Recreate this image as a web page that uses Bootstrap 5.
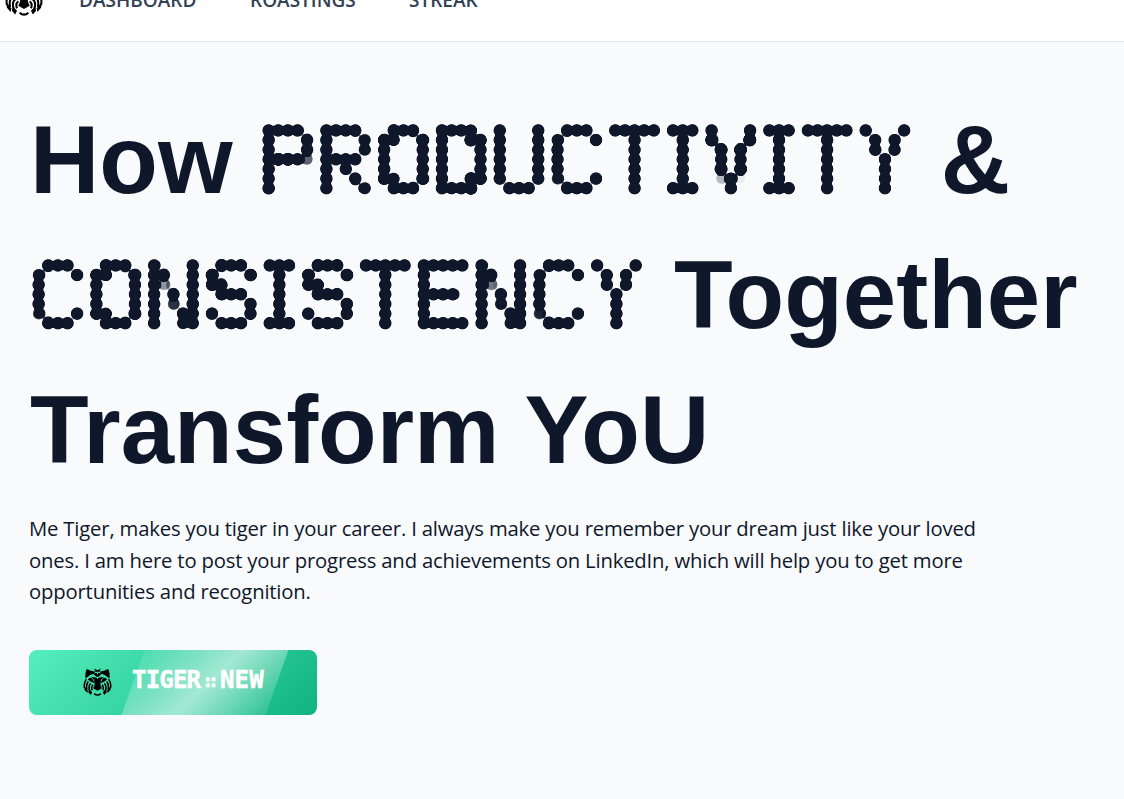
<!DOCTYPE html>
<html lang="en">
<head>
<meta charset="utf-8">
<meta name="viewport" content="width=device-width, initial-scale=1">
<title>Tiger</title>
<link href="https://cdn.jsdelivr.net/npm/bootstrap@5.3.0/dist/css/bootstrap.min.css" rel="stylesheet">
<style>
body{background:#f8fafc;color:#0f172a;font-family:"Open Sans","Noto Sans",sans-serif;height:799px;overflow:hidden}
.topbar{height:42px;border-color:#e2e8f0!important;overflow:hidden}
.topbar .logo{width:38px;height:37px;margin:-21px 0 0 5px}
.topbar a{color:#334155;font-size:19px;line-height:24px;font-weight:600;text-decoration:none;margin-top:-12px;white-space:nowrap}
.topbar .nav-first{margin-left:36px;width:171px}
.topbar .nav-second{width:159px}
.hero{padding:50px 29px 0}
.hero h1{font:bold 96px/135px "Liberation Sans",sans-serif;margin:0 0 16px 1px;white-space:nowrap}
.dotted{height:96px;vertical-align:baseline;overflow:visible;margin:0 .5px -19px -.5px}
br+.dotted{margin-left:-1.5px;margin-right:2.5px}
.dotted text{font:100px "Liberation Mono",monospace;stroke-linejoin:round}
.intro{font-size:20.3px;letter-spacing:-.185px;line-height:31.5px;margin:0 0 42px;white-space:nowrap}
.intro span{display:block}
.cta{width:288px;height:65px;border:0;border-radius:8px;background:linear-gradient(135deg,#54efbd,#10b37f);overflow:hidden;padding:0 0 0 54px;color:#fff}
.cta::before{content:"";position:absolute;left:104px;top:0;width:144px;height:65px;transform:skewX(-19.5deg);background:linear-gradient(125deg,rgba(255,255,255,.08),rgba(255,255,255,.57) 52%,rgba(255,255,255,.1))}
.cta svg{width:29px;height:28px}
.cta b{font:bold 24px/30px "DejaVu Sans Mono",monospace;letter-spacing:-.8px;margin:0 0 3px 20px;white-space:nowrap;-webkit-text-stroke:.5px #fff}
.cta b i{font-style:normal;font-size:18px;letter-spacing:-5px;margin:0 6px 0 2px;position:relative;top:-1px}
.cta b u{text-decoration:none;letter-spacing:.2px}
</style>
</head>
<body>
<svg width="0" height="0" class="position-absolute" aria-hidden="true">
<defs>
<pattern id="points" width="9.63" height="9.63" patternUnits="userSpaceOnUse"><rect x="4.3" y="4.3" width="1" height="1" fill="#0f172a"/></pattern>
<filter id="round" filterUnits="userSpaceOnUse" x="0" y="-10" width="700" height="120" color-interpolation-filters="sRGB">
<feConvolveMatrix order="13" divisor="1" edgeMode="none" in="SourceAlpha" result="d" kernelMatrix="
0 0 0 .1 .5 .7 .8 .7 .5 .1 0 0 0
0 0 .35 1 1 1 1 1 1 1 .35 0 0
0 .35 1 1 1 1 1 1 1 1 1 .35 0
.1 1 1 1 1 1 1 1 1 1 1 1 .1
.5 1 1 1 1 1 1 1 1 1 1 1 .5
.7 1 1 1 1 1 1 1 1 1 1 1 .7
.8 1 1 1 1 1 1 1 1 1 1 1 .8
.7 1 1 1 1 1 1 1 1 1 1 1 .7
.5 1 1 1 1 1 1 1 1 1 1 1 .5
.1 1 1 1 1 1 1 1 1 1 1 1 .1
0 .35 1 1 1 1 1 1 1 1 1 .35 0
0 0 .35 1 1 1 1 1 1 1 .35 0 0
0 0 0 .1 .5 .7 .8 .7 .5 .1 0 0 0"/>
<feComponentTransfer result="e"><feFuncA type="linear" slope="2.6" intercept="-.9"/></feComponentTransfer>
<feFlood flood-color="#0f172a"/><feComposite in2="e" operator="in"/>
</filter>
<symbol id="tiger" viewBox="0 0 60 58">
<path d="M8 2Q18 8 26 7L22 12Q14 14 9 19L5 22Q4 9 8 2ZM52 2Q42 8 34 7L38 12Q46 14 51 19L55 22Q56 9 52 2ZM23 1L29 4H31L37 1L34 8H26ZM21 12L28 10L30 14L32 10L39 12L32 18H28ZM17 18L28 20L30 23L32 20L43 18L37 25L36 35L39 42L30 47L21 42L24 35L23 25Z"/>
<path d="M10 24Q14 18 19 22L24 31Q16 30 10 24ZM50 24Q46 18 41 22L36 31Q44 30 50 24Z"/>
<g fill="none" stroke="#000" stroke-width="3.2"><path d="M7 23Q1 31 3 41M11 28Q6 34 8 44M16 32Q10 37 14 47M21 35Q16 39 19 46M53 23Q59 31 57 41M49 28Q54 34 52 44M44 32Q50 37 46 47M39 35Q44 39 41 46M23 53Q30 59 37 53"/></g>
<path d="M2 36L10 46L9 52L3 45ZM12 43L19 50L16 56L11 50ZM58 36L50 46L51 52L57 45ZM48 43L41 50L44 56L49 50Z"/>
</symbol>
</defs>
</svg>
<nav class="topbar bg-white border-bottom d-flex align-items-start">
<svg class="logo flex-shrink-0"><use href="#tiger"/></svg>
<a href="#" class="nav-first">DASHBOARD</a>
<a href="#" class="nav-second">ROASTINGS</a>
<a href="#">STREAK</a>
</nav>
<main class="hero">
<h1>How <svg class="dotted" data-word="PRODUCTIVITY"></svg> &amp;<br><svg class="dotted" data-word="CONSISTENCY"></svg> Together<br>Transform YoU</h1>
<p class="intro"><span>Me Tiger, makes you tiger in your career. I always make you remember your dream just like your loved</span><span>ones. I am here to post your progress and achievements on LinkedIn, which will help you to get more</span><span>opportunities and recognition.</span></p>
<button class="cta btn position-relative d-flex align-items-center"><svg class="position-relative"><use href="#tiger"/></svg><b class="position-relative">TIGER<i>::</i><u>NEW</u></b></button>
</main>
<script src="https://cdn.jsdelivr.net/npm/bootstrap@5.3.0/dist/js/bootstrap.bundle.min.js"></script>
<script>
// Fits each letter of a display word to a five by seven grid of dots.
const pitch = 9.63, ns = 'http://www.w3.org/2000/svg';
// Extra stroke per letter, so that its lines reach the grid points.
const weight = {P: 2.6, V: 3.4, D: 2, O: 1.6, S: 1.6};
const pen = document.createElement('canvas').getContext('2d');
pen.font = '100px "Liberation Mono"';
document.querySelectorAll('.dotted').forEach(svg => {
  const g = document.createElementNS(ns, 'g');
  g.setAttribute('filter', 'url(#round)');
  svg.append(g);
  let col = 0;
  for (const ch of svg.dataset.word) {
    const cols = ch === 'I' ? 3 : 5;
    const m = pen.measureText(ch);
    const w = m.actualBoundingBoxLeft + m.actualBoundingBoxRight;
    const h = m.actualBoundingBoxAscent + m.actualBoundingBoxDescent;
    const sx = (cols * pitch - 1) / w, sy = (7 * pitch - 1) / h * (ch === 'P' ? .97 : 1);
    const x = (col + .5) * pitch + .5 + m.actualBoundingBoxLeft * sx;
    const y = pitch + .5 + m.actualBoundingBoxAscent * sy;
    const t = document.createElementNS(ns, 'text');
    t.textContent = ch;
    t.setAttribute('transform', `translate(${x} ${y}) scale(${sx} ${sy})`);
    // The dot grid stays on the page while the letter is stretched.
    const p = document.getElementById('points').cloneNode(true);
    p.id = 'p' + svg.dataset.word + col;
    p.setAttribute('patternTransform', `scale(${1 / sx} ${1 / sy}) translate(${-x + .5 * pitch} ${-y})`);
    g.append(p, t);
    t.style.fill = `url(#${p.id})`;
    if (weight[ch]) {
      t.style.stroke = `url(#${p.id})`;
      t.style.strokeWidth = weight[ch];
    }
    col += cols + 1;
  }
  svg.style.width = col * pitch + 'px';
});
</script>
</body>
</html>
